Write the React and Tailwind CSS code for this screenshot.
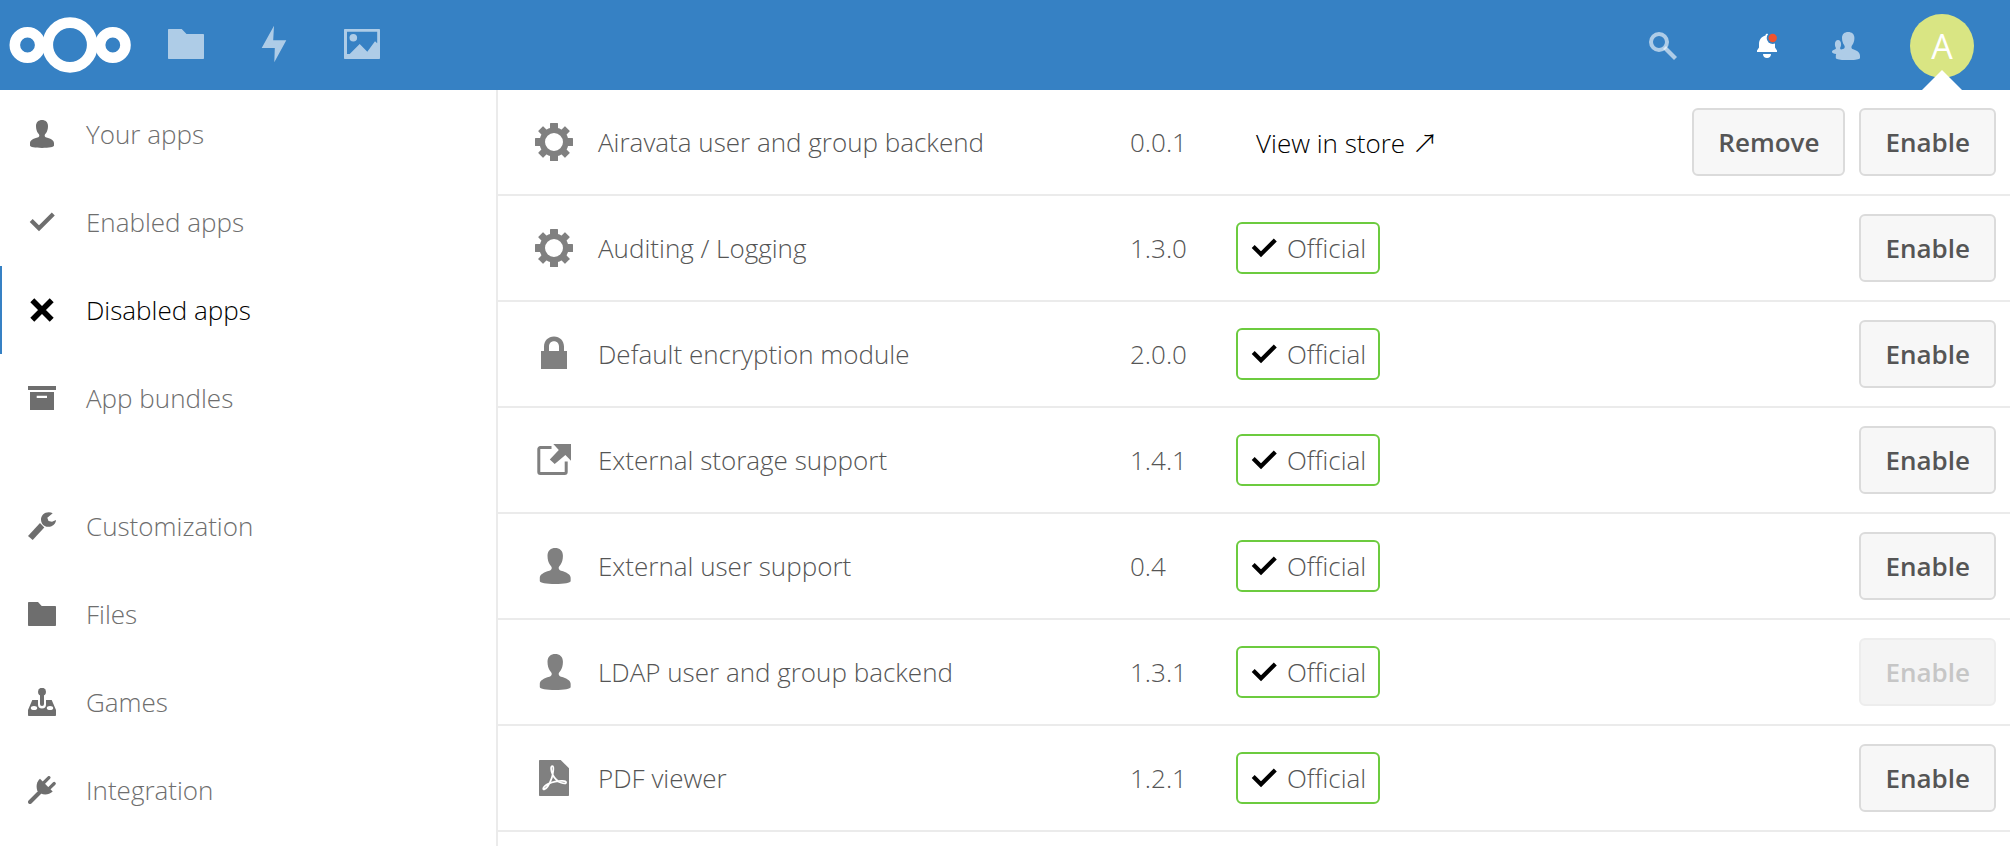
const PERSON =
  'M14 0c-3.3 0-6 2-6 6 0 3 .8 5.5 1.9 7 .9 1.2 1.4 1.6 1.4 2.6 0 1-.5 1.6-1.8 2C5 18.7 2 20.6 2 23.2v2.4C2 27 7 28 14 28s12-1 12-2.4v-2.4c0-2.6-3-4.5-7.5-5.6-1.3-.4-1.8-1-1.8-2 0-1 .5-1.4 1.4-2.6C19.2 11.5 20 9 20 6c0-4-2.7-6-6-6z';

function Icon({ box, className, children }) {
  return (
    <svg viewBox={box} className={className} fill="currentColor" aria-hidden="true">
      {children}
    </svg>
  );
}

function Check() {
  return <path d="M3.2 12.5l7.8 7.7L25.3 6" fill="none" stroke="currentColor" strokeWidth="4.2" />;
}

const navIcons = {
  user: <path d={PERSON} />,
  check: <Check />,
  close: <path d="M4.3 4.3l19.4 19.4M23.7 4.3L4.3 23.7" stroke="currentColor" strokeWidth="5.6" />,
  bundles: <path fillRule="evenodd" d="M0 2h28v4H0zM2 8h24v18H2zM8.7 11.7v2.3H19v-2.3z" />,
  wrench: (
    <>
      <path d="M0 24l4.7 4L16.3 15.6 12 10.9z" />
      <path d="M24.7 1.2C22-.5 17.5-.1 15 2.4c-2.5 2.6-2.5 6.4-1 9 2 3.2 6 4.2 9.5 2.8C26.5 13 28 10.5 28 8l-4 1.8-3.5-.8-1.2-3.3z" />
    </>
  ),
  folder: <path d="M.8 2H10l3.7 4h13.5c.5 0 .8.3.8.8v18.4c0 .5-.3.8-.8.8H.8c-.5 0-.8-.3-.8-.8V2.8C0 2.3.3 2 .8 2z" />,
  games: (
    <>
      <circle cx="14" cy="3.8" r="4" />
      <rect x="12" y="4" width="4" height="14" rx="2" />
      <path
        fillRule="evenodd"
        d="M4.3 12H10v4.5a4 4 0 0 0 8 0V12h5.7L28 22v5.2c0 .5-.3.8-.8.8H.8c-.5 0-.8-.3-.8-.8V22zM2.8 20a3.2 2 0 1 0 6.4 0 3.2 2 0 1 0-6.4 0zM18.8 20a3.2 2 0 1 0 6.4 0 3.2 2 0 1 0-6.4 0z"
      />
    </>
  ),
  plug: (
    <>
      <path d="M2 26l11-11" stroke="currentColor" strokeWidth="4" strokeLinecap="round" />
      <path d="M15.5 7l5.4-5.400M20.7 12.900l5.5-5.400" stroke="currentColor" strokeWidth="3.2" strokeLinecap="round" />
      <path d="M12 2.8c-3 2.4-4.2 7.2-2.8 11.5 3 4.5 10.3 6.2 15.5 1.2z" />
    </>
  ),
};

const appIcons = {
  gear: (
    <Icon box="-1 -1 40 40" className="size-10">
      <circle cx="19" cy="19" r="11.8" fill="none" stroke="currentColor" strokeWidth="5.6" />
      <rect x="15" y="0" width="8" height="7" rx=".5" />
      <rect x="15" y="31" width="8" height="7" rx=".5" />
      <rect x="0" y="15" width="7" height="8" rx=".5" />
      <rect x="31" y="15" width="7" height="8" rx=".5" />
      <g transform="rotate(45 19 19)">
        <rect x="15.5" y="0" width="7" height="7" rx=".5" />
        <rect x="15.5" y="31" width="7" height="7" rx=".5" />
        <rect x="0" y="15.5" width="7" height="7" rx=".5" />
        <rect x="31" y="15.5" width="7" height="7" rx=".5" />
      </g>
    </Icon>
  ),
  lock: (
    <Icon box="-2 -2 40 40" className="size-10">
      <path
        fillRule="evenodd"
        d="M18 .6c-5.700 0-10 4.300-10 10V15H5v18h26V15h-3v-4.400c0-5.700-4.300-10-10-10zM18 5.200c3 0 5 2.200 5 5.400V15H13v-4.400c0-3.200 2-5.400 5-5.400z"
      />
    </Icon>
  ),
  external: (
    <Icon box="-2 -2 40 40" className="size-10">
      <path
        d="M15.5 5.5H4.3c-.8 0-1.5.7-1.5 1.5v23c0 .8.7 1.5 1.5 1.5h24.400c.8 0 1.500-.7 1.500-1.500V19.500"
        fill="none"
        stroke="currentColor"
        strokeWidth="3"
      />
      <path d="M17.300 2H35v16.700l-5.600-5.600-10.700 9-4.900-4.700 9-9.500z" />
    </Icon>
  ),
  user: (
    <Icon box="-2.5 -1.55 31.1 31.1" className="size-10">
      <path d={PERSON} />
    </Icon>
  ),
  pdf: (
    <Icon box="-2 -2 40 40" className="size-10">
      <path d="M4 0h20.700L33 8.300V35c0 .6-.4 1-1 1H4c-.6 0-1-.4-1-1V1c0-.6.4-1 1-1z" />
      <path
        d="M16.500 6c-2.200 0-1.600 5 .3 9 2 3.800 5 6.500 8.500 7.800 3 1 5 .8 4.800-.6-.3-1.600-6-1.600-11-.6-4.500 1-8.500 2.800-10.300 4.600-2 2-2 3.600-.6 3.200 2.500-.8 5.800-6.500 7.600-11.500C17.100 13.900 18.200 6 16.500 6z"
        fill="none"
        stroke="#fff"
        strokeWidth="1.7"
      />
    </Icon>
  ),
};

const sections = [
  [
    { label: 'Your apps', icon: 'user' },
    { label: 'Enabled apps', icon: 'check' },
    { label: 'Disabled apps', icon: 'close', active: true },
    { label: 'App bundles', icon: 'bundles' },
  ],
  [
    { label: 'Customization', icon: 'wrench' },
    { label: 'Files', icon: 'folder' },
    { label: 'Games', icon: 'games' },
    { label: 'Integration', icon: 'plug' },
  ],
];

const apps = [
  { name: 'Airavata user and group backend', version: '0.0.1', icon: 'gear', store: true, removable: true },
  { name: 'Auditing / Logging', version: '1.3.0', icon: 'gear' },
  { name: 'Default encryption module', version: '2.0.0', icon: 'lock' },
  { name: 'External storage support', version: '1.4.1', icon: 'external' },
  { name: 'External user support', version: '0.4', icon: 'user' },
  { name: 'LDAP user and group backend', version: '1.3.1', icon: 'user', disabled: true },
  { name: 'PDF viewer', version: '1.2.1', icon: 'pdf' },
];

function Header() {
  return (
    <header className="flex h-[90px] items-center justify-between bg-[#3681c4] pr-9 text-white">
      <nav className="flex h-full items-center" aria-label="Apps">
        <a href="#home" aria-label="Home" className="flex w-[142px] pl-2">
          <svg viewBox="8 17 124 56" className="h-14 w-[124px]" fill="none" stroke="#fff" aria-hidden="true">
            <circle cx="27.5" cy="45" r="12.7" strokeWidth="10.6" />
            <circle cx="70" cy="45" r="22.3" strokeWidth="10.8" />
            <circle cx="112.8" cy="45" r="12.7" strokeWidth="10.6" />
          </svg>
        </a>
        <a href="#files" aria-label="Files" className="flex w-[88px] justify-center text-white/60">
          <Icon box="0 0 40 40" className="size-10">
            <path d="M3 4h12.700l4.800 5H37c.6 0 1 .4 1 1v23c0 .6-.4 1-1 1H3c-.6 0-1-.4-1-1V5c0-.6.4-1 1-1z" />
          </Icon>
        </a>
        <a href="#activity" aria-label="Activity" className="flex w-[88px] justify-center text-white/60">
          <Icon box="0 0 40 40" className="size-10">
            <path d="M20 .7L7.700 23h13.100l-.5 14.300 12-22H19.200z" />
          </Icon>
        </a>
        <a href="#gallery" aria-label="Gallery" className="flex w-[88px] justify-center text-white/60">
          <Icon box="0 0 40 40" className="size-10">
            <path
              fillRule="evenodd"
              d="M3 4h34c.6 0 1 .4 1 1v28c0 .6-.4 1-1 1H3c-.6 0-1-.4-1-1V5c0-.6.4-1 1-1zM5 6.800V29h2.700l10-10 7.600 7.700L33 16.300l2.200 2V6.800z"
            />
            <circle cx="11.3" cy="12.7" r="3.8" />
          </Icon>
        </a>
      </nav>
      <div className="flex h-full items-center gap-[49px]">
        <button type="button" aria-label="Search" className="mr-[25px] text-white/60">
          <Icon box="0 0 30 30" className="size-[30px]">
            <circle cx="11" cy="12" r="8" fill="none" stroke="currentColor" strokeWidth="4" />
            <path d="M16.500 17.500L27.500 28.500" stroke="currentColor" strokeWidth="4.2" />
          </Icon>
        </button>
        <button type="button" aria-label="Notifications">
          <Icon box="0 0 30 30" className="size-[30px]">
            <path d="M5 20.500l2-3V14c0-4.500 2.500-7.500 6.500-8.600v-.1c0-.8.700-1.500 1.500-1.500s1.500.7 1.500 1.500v.1c4 1.100 6.500 4.100 6.500 8.600v3.500l2 3V22H5zM11 24h8c0 2.400-1.600 4-4 4s-4-1.600-4-4z" />
            <circle cx="20.7" cy="8" r="6" fill="#3681c4" />
            <circle cx="20.7" cy="8" r="4.2" fill="#f0532d" />
          </Icon>
        </button>
        <button type="button" aria-label="Contacts" className="text-white/60">
          <Icon box="0 0 30 30" className="size-[30px]">
            <path d="M17.200 2c-3.600 0-6.200 2-6.200 6 0 3 1 5.500 2.100 7 .7 1 .9 2.300.2 3.200-.6.700-2 .9-3.300 1.200-.6-.3-1-.8-.8-1.700.5-.8.900-1.900.9-3.700 0-2.200-1.200-4-3.100-4s-3.100 1.800-3.100 4c0 1.800.4 2.900.9 3.700.3 1-.2 1.500-1.200 1.900C2 20.100 1 20.700 1 21.800c0 1.400 1.800 2 4.200 2.100-.3.700-.4 1.300-.4 2V28c0 1.300 5 2.100 12.200 2.100S29 29.300 29 28v-2c0-3.200-2.600-5.200-5.600-6.200-1.900-.5-2.600-1-2.900-2-.2-1 .2-1.900.8-2.800 1.200-1.500 2.100-4 2.100-7 0-4-2.600-6-6.200-6z" />
          </Icon>
        </button>
        <div className="relative flex h-full items-center pt-[2px]">
          <button
            type="button"
            aria-label="Account"
            className="flex size-16 items-center justify-center rounded-full bg-[#d9e583] text-[34px] leading-none font-medium"
          >
            A
          </button>
          <svg viewBox="0 0 40 20" className="absolute bottom-0 left-1/2 h-5 w-10 -translate-x-1/2" fill="#fff" aria-hidden="true">
            <path d="M20 0l20 20H0z" />
          </svg>
        </div>
      </div>
    </header>
  );
}

function Sidebar() {
  return (
    <nav className="flex w-[498px] shrink-0 flex-col gap-10 border-r-2 border-[#ebebeb]" aria-label="Categories">
      {sections.map((items, i) => (
        <ul key={i}>
          {items.map((item) => (
            <li key={item.label}>
              <a
                href="#category"
                className={
                  item.active
                    ? 'flex h-[88px] items-center gap-[30px] border-l-2 border-[#3681c4] pl-[26px] text-black'
                    : 'flex h-[88px] items-center gap-[30px] border-l-2 border-transparent pl-[26px] text-[#6e6e6e]'
                }
              >
                <Icon box="0 0 28 28" className="size-7">
                  {navIcons[item.icon]}
                </Icon>
                {item.label}
              </a>
            </li>
          ))}
        </ul>
      ))}
    </nav>
  );
}

function ActionButton({ children, disabled }) {
  return (
    <button
      type="button"
      disabled={disabled}
      className="h-[68px] rounded-md border-2 border-[#dbdbdb] bg-[#f7f7f7] px-6 font-semibold text-[#555] disabled:border-[#ededed] disabled:bg-[#f4f4f4] disabled:text-[#c6c6c6]"
    >
      {children}
    </button>
  );
}

function AppRow({ app }) {
  return (
    <tr className="h-[106px] *:border-b-2 *:border-[#ebebeb]">
      <td className="pl-9 text-[#808080]">{appIcons[app.icon]}</td>
      <td>{app.name}</td>
      <td>{app.version}</td>
      <td>
        {app.store ? (
          <a href="#store" className="pl-5 text-black">
            View in store <span className="font-['Noto_Sans_CJK_JP',sans-serif]">↗</span>
          </a>
        ) : (
          <span className="inline-flex h-[52px] items-center gap-[9px] rounded-md border-2 border-[#6ccb3f] px-3 align-middle">
            <Icon box="0 0 28 28" className="size-7 text-black">
              <Check />
            </Icon>
            Official
          </span>
        )}
      </td>
      <td className="pr-[14px]">
        <div className="flex justify-end gap-[14px]">
          {app.removable && <ActionButton>Remove</ActionButton>}
          <ActionButton disabled={app.disabled}>Enable</ActionButton>
        </div>
      </td>
    </tr>
  );
}

export default function App() {
  return (
    <div className="flex min-h-screen flex-col bg-white font-['Open_Sans',sans-serif] text-[26px] leading-9 font-light text-[#555]">
      <Header />
      <div className="flex grow">
        <Sidebar />
        <main className="grow">
          <table className="w-full table-fixed border-separate border-spacing-0" aria-label="Disabled apps">
            <colgroup>
              <col className="w-[100px]" />
              <col className="w-[532px]" />
              <col className="w-[106px]" />
              <col className="w-[300px]" />
              <col />
            </colgroup>
            <tbody>
              {apps.map((app) => (
                <AppRow key={app.name} app={app} />
              ))}
            </tbody>
          </table>
        </main>
      </div>
    </div>
  );
}
